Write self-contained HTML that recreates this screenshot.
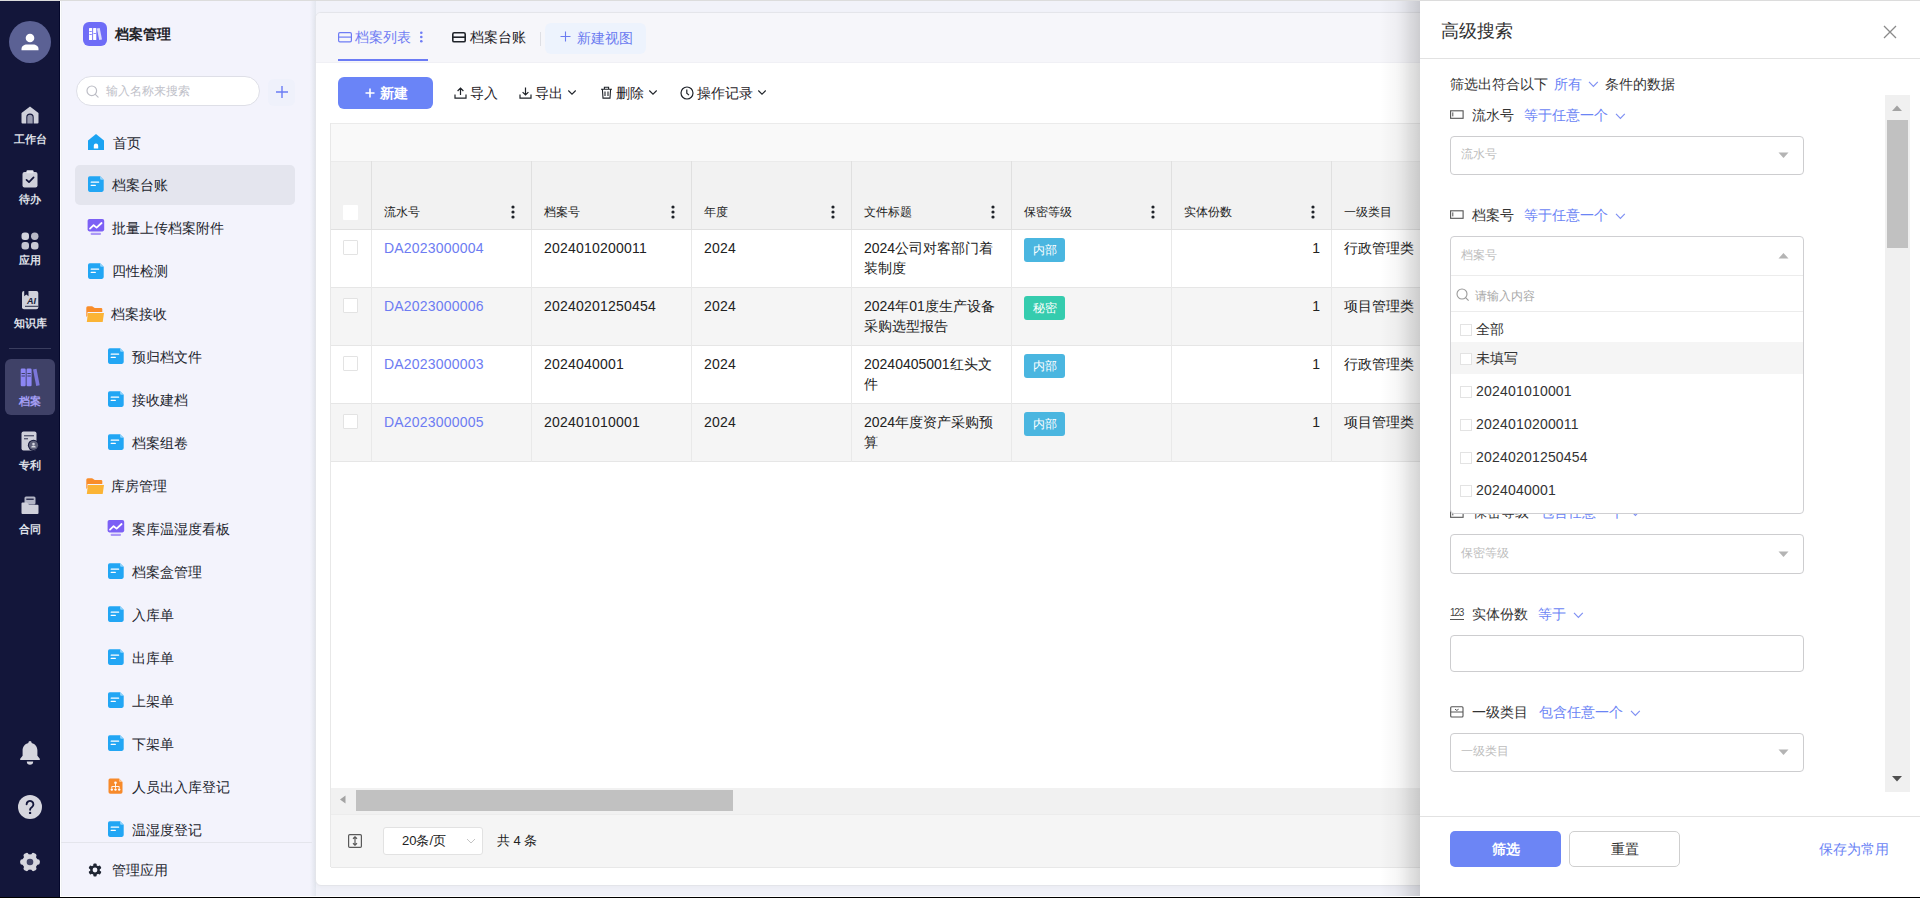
<!DOCTYPE html>
<html><head><meta charset="utf-8">
<style>
*{box-sizing:border-box;margin:0;padding:0}
html,body{width:1920px;height:898px;overflow:hidden}
body{position:relative;background:#f1f2f9;font-family:"Liberation Sans",sans-serif;color:#23262f;font-size:14px}
.abs{position:absolute}
.t{position:absolute;white-space:nowrap;line-height:20px}
.navl{font-size:11px;font-weight:bold;color:#dfe0e8}
#topline{left:0;top:0;width:1920px;height:1px;background:#dcdcdc;z-index:50}
#botline{left:0;top:897px;width:1920px;height:1px;background:#000;z-index:50}
#botwhite{left:60px;top:896px;width:1920px;height:1px;background:#fff;z-index:50}
</style></head><body>
<div class="abs" style="left:0;top:0;width:60px;height:898px;background:#13163a"></div>
<div class="abs" style="left:60px;top:0;width:256px;height:898px;background:#f3f3fc"></div>
<div class="abs" style="left:59px;top:0;width:1px;height:898px;background:#04072b"></div>
<div class="abs" style="left:60px;top:0;width:1px;height:898px;background:#fff"></div>
<div class="abs" style="left:61px;top:0;width:1px;height:898px;background:#eef0f4"></div>
<div class="abs" style="left:310px;top:0;width:6px;height:898px;background:linear-gradient(to right,rgba(220,225,232,0),rgba(220,225,232,.7))"></div>
<svg width="0" height="0" style="position:absolute">
<defs>
<linearGradient id="gdoc" x1="0" y1="0" x2="1" y2="1"><stop offset="0" stop-color="#2aa9f5"/><stop offset="1" stop-color="#1f9ff0"/></linearGradient>
<symbol id="doc" viewBox="0 0 16 16"><path d="M1.8 0.2h10.3l3.6 3.6v10.3a1.8 1.8 0 0 1-1.8 1.8H1.8A1.8 1.8 0 0 1 0 14.1V2A1.8 1.8 0 0 1 1.8 0.2z" fill="#22a6f4"/><path d="M12.1 0.2l3.6 3.6h-2.4a1.2 1.2 0 0 1-1.2-1.2z" fill="#8fd3fb"/><rect x="2.6" y="5.4" width="8.6" height="1.4" rx=".5" fill="#fff"/><rect x="2.6" y="8.7" width="5.3" height="1.4" rx=".5" fill="#fff"/></symbol>
<symbol id="folder" viewBox="0 0 18 17"><path d="M0.3 1.8a1.5 1.5 0 0 1 1.5-1.5h4c1.2 0 1.8 1.6 3 1.6h6.3a1.2 1.2 0 0 1 1.2 1.2v2.8H1.5v3.5l-1.2 1.6z" fill="#f98d2a"/><path d="M1.9 6.9H18l-1.3 9.1H0.8z" fill="#fbb435"/></symbol>
<symbol id="chart" viewBox="0 0 18 18"><rect x="0.6" y="0" width="16.6" height="12.4" rx="1.8" fill="#7c60f5"/><path d="M3 9.6l3.6-3.4 3 2.4 5-4.6" stroke="#fff" stroke-width="1.8" fill="none" stroke-linecap="round" stroke-linejoin="round"/><rect x="3.6" y="13.8" width="10.4" height="2.3" rx="1" fill="#ab98f7"/></symbol>
</defs></svg>

<!-- NAV -->
<div class="abs" style="left:9px;top:21px;width:42px;height:42px;border-radius:50%;background:#5b6194"></div>
<svg class="abs" style="left:21px;top:33px" width="18" height="18" viewBox="0 0 18 18"><circle cx="9" cy="5" r="4.3" fill="#fff"/><path d="M0.5 17.3v-1.3c0-2.6 2.6-4.4 5.4-4.4h6.2c2.8 0 5.4 1.8 5.4 4.4v1.3z" fill="#fff"/></svg>

<svg class="abs" style="left:21px;top:106px" width="18" height="18" viewBox="0 0 18 18"><path d="M9 0.5L17.5 7v9.5a1 1 0 0 1-1 1h-3.8v-6.2a3.7 3.7 0 0 0-7.4 0v6.2H1.5a1 1 0 0 1-1-1V7z" fill="#cfd0da"/><path d="M6.3 17.5v-6a2.7 2.7 0 0 1 5.4 0v6z" fill="#9a9cb0"/></svg>
<div class="t navl" style="left:0;width:60px;text-align:center;top:129px">工作台</div>

<svg class="abs" style="left:22px;top:170px" width="16" height="18" viewBox="0 0 16 18"><rect x="0.5" y="2" width="15" height="15.5" rx="2" fill="#cfd0da"/><rect x="4.5" y="0.3" width="7" height="3" rx="1" fill="#e6e7ee"/><path d="M4.5 9.8l2.5 2.4 4.6-4.8" stroke="#13163a" stroke-width="1.7" fill="none" stroke-linecap="round" stroke-linejoin="round"/></svg>
<div class="t navl" style="left:0;width:60px;text-align:center;top:189px">待办</div>

<svg class="abs" style="left:21px;top:232px" width="18" height="18" viewBox="0 0 18 18"><rect x="0.5" y="0.5" width="7.5" height="7.5" rx="3" fill="#d2d3dc"/><rect x="10" y="0.5" width="7.5" height="7.5" rx="3.7" fill="#b7b8c6"/><rect x="0.5" y="10" width="7.5" height="7.5" rx="3" fill="#c4c5d1"/><rect x="10" y="10" width="7.5" height="7.5" rx="3" fill="#c9cad5"/></svg>
<div class="t navl" style="left:0;width:60px;text-align:center;top:250px">应用</div>

<svg class="abs" style="left:22px;top:291px" width="17" height="19" viewBox="0 0 17 19"><rect x="0" y="0" width="16.3" height="18.3" rx="2" fill="#d0d1db"/><path d="M3 15.3h13.3" stroke="#2a2d4a" stroke-width="1"/><path d="M2.2 0h4.3v5.3L4.35 3.6 2.2 5.3z" fill="#13163a"/><text x="9.6" y="13.2" font-family="Liberation Sans" font-style="italic" font-weight="bold" font-size="9" fill="#1c1f3c" text-anchor="middle">AI</text></svg>
<div class="t navl" style="left:0;width:60px;text-align:center;top:313px">知识库</div>

<div class="abs" style="left:9px;top:348px;width:42px;height:1px;background:#3a3d5e"></div>
<div class="abs" style="left:5px;top:359px;width:50px;height:56px;border-radius:6px;background:#3f4167"></div>
<svg class="abs" style="left:20px;top:368px" width="20" height="19" viewBox="0 0 20 19"><rect x="0.7" y="0.5" width="5" height="17.8" rx="1.2" fill="#8c86f4"/><rect x="6.6" y="0.5" width="5" height="17.8" rx="1.2" fill="#8c86f4"/><path d="M13 1.5l3.5-.8 3.2 16.6-3.5.8z" fill="#7b76d9"/><rect x="1.5" y="5" width="3.4" height="1" fill="#3f4167"/><rect x="1.5" y="7.5" width="3.4" height="1" fill="#3f4167"/><rect x="7.4" y="5" width="3.4" height="1" fill="#3f4167"/><rect x="7.4" y="7.5" width="3.4" height="1" fill="#3f4167"/></svg>
<div class="t navl" style="left:0;width:60px;text-align:center;top:391px;color:#a49ef5">档案</div>

<svg class="abs" style="left:21px;top:431px" width="18" height="20" viewBox="0 0 18 20"><rect x="0.5" y="0.5" width="15" height="19" rx="2" fill="#cfd0da"/><rect x="3" y="4" width="10" height="1.4" fill="#5a5c74"/><rect x="3" y="7" width="4" height="1.4" fill="#5a5c74"/><circle cx="12.5" cy="14.3" r="5.6" fill="#13163a"/><circle cx="12.5" cy="14.3" r="4.6" fill="#5d5f78"/><circle cx="12.5" cy="13" r="1.3" fill="#d6d7e0"/><path d="M10.2 16.6a2.3 2 0 0 1 4.6 0z" fill="#d6d7e0"/></svg>
<div class="t navl" style="left:0;width:60px;text-align:center;top:455px">专利</div>

<svg class="abs" style="left:21px;top:496px" width="18" height="18" viewBox="0 0 18 18"><rect x="3.5" y="0.5" width="11" height="8" rx="1.5" fill="#b3b5c5"/><rect x="5.3" y="2.6" width="7.4" height="1.2" fill="#13163a"/><path d="M0.5 7.5a1 1 0 0 1 1-1h4.5l2 2.2h8.5a1 1 0 0 1 1 1v7.3a1 1 0 0 1-1 1h-15a1 1 0 0 1-1-1z" fill="#cfd0da"/></svg>
<div class="t navl" style="left:0;width:60px;text-align:center;top:519px">合同</div>

<svg class="abs" style="left:19px;top:740px" width="22" height="25" viewBox="0 0 22 25"><path d="M11 1a1.6 1.6 0 0 1 1.6 1.6v.5c3.6.8 5.8 3.8 5.8 7.5v5.2l2.4 3v1.1H1.2v-1.1l2.4-3v-5.2c0-3.7 2.2-6.7 5.8-7.5v-.5A1.6 1.6 0 0 1 11 1z" fill="#d6d6de"/><path d="M7.8 21.5h6.4a3.2 3.2 0 0 1-6.4 0z" fill="#d6d6de"/></svg>
<svg class="abs" style="left:18px;top:795px" width="24" height="24" viewBox="0 0 24 24"><circle cx="12" cy="12" r="12" fill="#d6d6de"/><path d="M8.6 9.3a3.4 3.4 0 1 1 5.2 2.9c-1.1.7-1.7 1.2-1.7 2.6" stroke="#13163a" stroke-width="1.9" fill="none" stroke-linecap="round"/><circle cx="12.1" cy="17.9" r="1.2" fill="#13163a"/></svg>
<svg class="abs" style="left:19px;top:851px" width="22" height="22" viewBox="0 0 22 22"><g fill="#d6d6de"><circle cx="11" cy="11" r="7.8"/><rect x="8.3" y="1.2" width="5.4" height="5" rx="2" transform="rotate(30 11 11)"/><rect x="8.3" y="1.2" width="5.4" height="5" rx="2" transform="rotate(90 11 11)"/><rect x="8.3" y="1.2" width="5.4" height="5" rx="2" transform="rotate(150 11 11)"/><rect x="8.3" y="1.2" width="5.4" height="5" rx="2" transform="rotate(210 11 11)"/><rect x="8.3" y="1.2" width="5.4" height="5" rx="2" transform="rotate(270 11 11)"/><rect x="8.3" y="1.2" width="5.4" height="5" rx="2" transform="rotate(330 11 11)"/></g><circle cx="11" cy="11" r="3.3" fill="#3f4264"/></svg>

<!-- SIDEBAR -->
<div class="abs" style="left:83px;top:22px;width:24px;height:24px;border-radius:6px;background:#6e6cf7"></div>
<svg class="abs" style="left:83px;top:22px" width="24" height="24" viewBox="0 0 24 24"><rect x="6" y="6" width="3.2" height="12" rx=".6" fill="#fff"/><rect x="10.1" y="6" width="3.2" height="12" rx=".6" fill="#fff"/><path d="M13.9 6.6l2.8-.6 2.3 11.5-2.8.6z" fill="#dcdcfb"/><rect x="6.4" y="9" width="2.4" height=".8" fill="#6e6cf7"/><rect x="6.4" y="12" width="2.4" height=".8" fill="#6e6cf7"/><rect x="10.5" y="11" width="2.4" height=".8" fill="#6e6cf7"/></svg>
<div class="t" style="left:115px;top:24px;font-weight:bold;color:#1f2329">档案管理</div>

<div class="abs" style="left:76px;top:76px;width:184px;height:30px;border-radius:15px;background:#fff;border:1px solid #dedfe7"></div>
<svg class="abs" style="left:86px;top:85px" width="13" height="13" viewBox="0 0 13 13"><circle cx="5.8" cy="5.8" r="4.8" stroke="#bdbec6" stroke-width="1.2" fill="none"/><path d="M9.3 9.3l2.8 2.8" stroke="#bdbec6" stroke-width="1.2" stroke-linecap="round"/></svg>
<div class="t" style="left:106px;top:81px;font-size:12px;color:#c0c1c9">输入名称来搜索</div>
<div class="abs" style="left:268px;top:79px;width:27px;height:27px;border-radius:6px;background:#eceffb;opacity:.7"></div>
<svg class="abs" style="left:275px;top:85px" width="14" height="14" viewBox="0 0 14 14"><path d="M7 1v12M1 7h12" stroke="#6b7cf5" stroke-width="1.4"/></svg>

<svg class="abs" style="left:88px;top:134px" width="16" height="16" viewBox="0 0 16 16"><path d="M8 0L16 6.6V16H0V6.6z" fill="#1ba3f2"/><path d="M5.8 14.6v-2.8a2.2 2.2 0 0 1 4.4 0v2.8z" fill="#fff"/></svg>
<div class="t" style="left:113px;top:133px">首页</div>

<div class="abs" style="left:75px;top:165px;width:220px;height:40px;border-radius:5px;background:#e4e5ee"></div>
<svg class="abs" style="left:88px;top:176px" width="16" height="16"><use href="#doc"/></svg>
<div class="t" style="left:112px;top:175px">档案台账</div>

<svg class="abs" style="left:87px;top:219px" width="18" height="18"><use href="#chart"/></svg>
<div class="t" style="left:112px;top:218px">批量上传档案附件</div>

<svg class="abs" style="left:88px;top:263px" width="16" height="16"><use href="#doc"/></svg>
<div class="t" style="left:112px;top:261px">四性检测</div>

<svg class="abs" style="left:86px;top:306px" width="18" height="17"><use href="#folder"/></svg>
<div class="t" style="left:111px;top:304px">档案接收</div>

<svg class="abs" style="left:108px;top:348px" width="16" height="16"><use href="#doc"/></svg>
<div class="t" style="left:132px;top:347px">预归档文件</div>
<svg class="abs" style="left:108px;top:391px" width="16" height="16"><use href="#doc"/></svg>
<div class="t" style="left:132px;top:390px">接收建档</div>
<svg class="abs" style="left:108px;top:434px" width="16" height="16"><use href="#doc"/></svg>
<div class="t" style="left:132px;top:433px">档案组卷</div>

<svg class="abs" style="left:86px;top:478px" width="18" height="17"><use href="#folder"/></svg>
<div class="t" style="left:111px;top:476px">库房管理</div>

<svg class="abs" style="left:107px;top:520px" width="18" height="18"><use href="#chart"/></svg>
<div class="t" style="left:132px;top:519px">案库温湿度看板</div>
<svg class="abs" style="left:108px;top:563px" width="16" height="16"><use href="#doc"/></svg>
<div class="t" style="left:132px;top:562px">档案盒管理</div>
<svg class="abs" style="left:108px;top:606px" width="16" height="16"><use href="#doc"/></svg>
<div class="t" style="left:132px;top:605px">入库单</div>
<svg class="abs" style="left:108px;top:649px" width="16" height="16"><use href="#doc"/></svg>
<div class="t" style="left:132px;top:648px">出库单</div>
<svg class="abs" style="left:108px;top:692px" width="16" height="16"><use href="#doc"/></svg>
<div class="t" style="left:132px;top:691px">上架单</div>
<svg class="abs" style="left:108px;top:735px" width="16" height="16"><use href="#doc"/></svg>
<div class="t" style="left:132px;top:734px">下架单</div>
<svg class="abs" style="left:108px;top:778px" width="16" height="16" viewBox="0 0 16 16"><path d="M2 0.5h9l3.5 3.5v10a1.8 1.8 0 0 1-1.8 1.8H2.3A1.8 1.8 0 0 1 0.5 14V2.3A1.8 1.8 0 0 1 2 0.5z" fill="#f78a2a"/><path d="M11 0.5l3.5 3.5h-2.3a1.2 1.2 0 0 1-1.2-1.2z" fill="#fbc08a"/><circle cx="7.5" cy="4.8" r="1.3" fill="#fff"/><path d="M7.5 6v2.5M3.8 8.5h7.4M3.8 8.5v2M7.5 8.5v2M11.2 8.5v2" stroke="#fff" stroke-width=".9"/><circle cx="3.8" cy="11.6" r="1.2" fill="#fff"/><circle cx="7.5" cy="11.6" r="1.2" fill="#fff"/><circle cx="11.2" cy="11.6" r="1.2" fill="#fff"/></svg>
<div class="t" style="left:132px;top:777px">人员出入库登记</div>
<svg class="abs" style="left:108px;top:821px" width="16" height="16"><use href="#doc"/></svg>
<div class="t" style="left:132px;top:820px">温湿度登记</div>

<div class="abs" style="left:61px;top:842px;width:251px;height:1px;background:#e4e5ec"></div>
<svg class="abs" style="left:88px;top:863px" width="14" height="14" viewBox="0 0 22 22"><g fill="#1f2533"><circle cx="11" cy="11" r="7.6"/><rect x="8.4" y="0.6" width="5.2" height="5" rx="1.6" transform="rotate(0 11 11)"/><rect x="8.4" y="0.6" width="5.2" height="5" rx="1.6" transform="rotate(60 11 11)"/><rect x="8.4" y="0.6" width="5.2" height="5" rx="1.6" transform="rotate(120 11 11)"/><rect x="8.4" y="0.6" width="5.2" height="5" rx="1.6" transform="rotate(180 11 11)"/><rect x="8.4" y="0.6" width="5.2" height="5" rx="1.6" transform="rotate(240 11 11)"/><rect x="8.4" y="0.6" width="5.2" height="5" rx="1.6" transform="rotate(300 11 11)"/></g><circle cx="11" cy="11" r="3.8" fill="#f3f3fc"/></svg>
<div class="t" style="left:112px;top:860px">管理应用</div>

<!-- CARD -->
<div class="abs" style="left:315px;top:12px;width:1600px;height:874px;background:#fff;border-radius:6px;border:1px solid #e4e5ea;box-shadow:0 2px 5px rgba(0,0,30,0.03)"></div>
<div class="abs" style="left:316px;top:13px;width:1598px;height:50px;background:#f6f6fa;border-radius:5px 5px 0 0;border-bottom:1px solid #f0f0f5"></div>
<svg class="abs" style="left:338px;top:32px" width="14" height="11" viewBox="0 0 14 11"><rect x=".6" y=".6" width="12.8" height="9.3" rx="1.3" stroke="#6e7cf5" stroke-width="1.2" fill="none"/><path d="M.6 5.1h12.8" stroke="#6e7cf5" stroke-width="1.2"/></svg>
<div class="t" style="left:355px;top:27px;color:#6f7cf3">档案列表</div>
<svg class="abs" style="left:419px;top:31px" width="5" height="12" viewBox="0 0 5 12"><circle cx="2.3" cy="1.8" r="1.3" fill="#6e7cf5"/><circle cx="2.3" cy="6" r="1.3" fill="#6e7cf5"/><circle cx="2.3" cy="10.2" r="1.3" fill="#6e7cf5"/></svg>
<div class="abs" style="left:338px;top:59px;width:90px;height:2px;background:#6b7bf5"></div>
<svg class="abs" style="left:452px;top:32px" width="14" height="11" viewBox="0 0 14 11"><rect x=".8" y=".8" width="12.4" height="9" rx="1.4" stroke="#1f2329" stroke-width="1.6" fill="none"/><path d="M.8 5.2h12.4" stroke="#1f2329" stroke-width="1.6"/></svg>
<div class="t" style="left:470px;top:27px;color:#1f2329">档案台账</div>
<div class="abs" style="left:540px;top:32px;width:1px;height:14px;background:#dedfe4"></div>
<div class="abs" style="left:545px;top:23px;width:101px;height:31px;border-radius:6px;background:#edf3fd"></div>
<svg class="abs" style="left:560px;top:31px" width="11" height="11" viewBox="0 0 11 11"><path d="M5.5 0.5v10M0.5 5.5h10" stroke="#6b7bf0" stroke-width="1.1"/></svg>
<div class="t" style="left:577px;top:28px;color:#6b7bf0">新建视图</div>

<div class="abs" style="left:338px;top:77px;width:95px;height:32px;border-radius:6px;background:#6a84f7"></div>
<svg class="abs" style="left:365px;top:88px" width="10" height="10" viewBox="0 0 10 10"><path d="M5 0.5v9M0.5 5h9" stroke="#fff" stroke-width="1.6"/></svg>
<div class="t" style="left:380px;top:83px;color:#fff;font-weight:bold">新建</div>

<svg class="abs" style="left:454px;top:87px" width="13" height="12" viewBox="0 0 13 12"><path d="M6.5 8V1.2M3.6 4l2.9-2.9L9.4 4M1 7.5v3.6h11V7.5" stroke="#1f2329" stroke-width="1.2" fill="none"/></svg>
<div class="t" style="left:470px;top:83px;color:#1f2329">导入</div>
<svg class="abs" style="left:519px;top:87px" width="13" height="12" viewBox="0 0 13 12"><path d="M6.5 0.5V8M3.6 5.1l2.9 2.9 2.9-2.9M1 7.5v3.6h11V7.5" stroke="#1f2329" stroke-width="1.2" fill="none"/></svg>
<div class="t" style="left:535px;top:83px;color:#1f2329">导出</div>
<svg class="abs" style="left:567px;top:89px" width="10" height="7" viewBox="0 0 10 7"><path d="M1.3 1.5l3.7 3.7 3.7-3.7" stroke="#1f2329" stroke-width="1.1" fill="none"/></svg>
<svg class="abs" style="left:600px;top:86px" width="13" height="13" viewBox="0 0 13 13"><path d="M1 3.2h11M4.4 3V1.3h4.2V3M2.4 3.2l.6 8.9h7l.6-8.9M5 5.5v4.5M8 5.5v4.5" stroke="#1f2329" stroke-width="1.1" fill="none"/></svg>
<div class="t" style="left:616px;top:83px;color:#1f2329">删除</div>
<svg class="abs" style="left:648px;top:89px" width="10" height="7" viewBox="0 0 10 7"><path d="M1.3 1.5l3.7 3.7 3.7-3.7" stroke="#1f2329" stroke-width="1.1" fill="none"/></svg>
<svg class="abs" style="left:680px;top:86px" width="14" height="14" viewBox="0 0 14 14"><circle cx="7" cy="7" r="6" stroke="#1f2329" stroke-width="1.2" fill="none"/><path d="M6.8 3.5v3.8l2.2 1.8" stroke="#1f2329" stroke-width="1.2" fill="none"/></svg>
<div class="t" style="left:697px;top:83px;color:#1f2329">操作记录</div>
<svg class="abs" style="left:757px;top:89px" width="10" height="7" viewBox="0 0 10 7"><path d="M1.3 1.5l3.7 3.7 3.7-3.7" stroke="#1f2329" stroke-width="1.1" fill="none"/></svg>

<div class="abs" style="left:330px;top:123px;width:1590px;height:38px;background:#f9f9f9;border-top:1px solid #ebebeb"></div>
<div class="abs" style="left:330px;top:161px;width:1590px;height:69px;background:#f2f2f2;border-top:1px solid #ebebeb;border-bottom:1px solid #e0e0e0"></div>
<div class="abs" style="left:330px;top:230px;width:1590px;height:58px;background:#fff;border-bottom:1px solid #e6e6e6"></div>
<div class="abs" style="left:330px;top:288px;width:1590px;height:58px;background:#f5f5f5;border-bottom:1px solid #e6e6e6"></div>
<div class="abs" style="left:330px;top:346px;width:1590px;height:58px;background:#fff;border-bottom:1px solid #e6e6e6"></div>
<div class="abs" style="left:330px;top:404px;width:1590px;height:58px;background:#f5f5f5;border-bottom:1px solid #e6e6e6"></div>
<div class="abs" style="left:330px;top:123px;width:1px;height:744px;background:#e8e8e8"></div>
<div class="abs" style="left:371px;top:161px;width:1px;height:69px;background:#e0e0e0"></div>
<div class="abs" style="left:371px;top:230px;width:1px;height:232px;background:#e9e9e9"></div>
<div class="abs" style="left:531px;top:161px;width:1px;height:69px;background:#e0e0e0"></div>
<div class="abs" style="left:531px;top:230px;width:1px;height:232px;background:#e9e9e9"></div>
<div class="abs" style="left:691px;top:161px;width:1px;height:69px;background:#e0e0e0"></div>
<div class="abs" style="left:691px;top:230px;width:1px;height:232px;background:#e9e9e9"></div>
<div class="abs" style="left:851px;top:161px;width:1px;height:69px;background:#e0e0e0"></div>
<div class="abs" style="left:851px;top:230px;width:1px;height:232px;background:#e9e9e9"></div>
<div class="abs" style="left:1011px;top:161px;width:1px;height:69px;background:#e0e0e0"></div>
<div class="abs" style="left:1011px;top:230px;width:1px;height:232px;background:#e9e9e9"></div>
<div class="abs" style="left:1171px;top:161px;width:1px;height:69px;background:#e0e0e0"></div>
<div class="abs" style="left:1171px;top:230px;width:1px;height:232px;background:#e9e9e9"></div>
<div class="abs" style="left:1331px;top:161px;width:1px;height:69px;background:#e0e0e0"></div>
<div class="abs" style="left:1331px;top:230px;width:1px;height:232px;background:#e9e9e9"></div>
<div class="abs" style="left:1491px;top:161px;width:1px;height:69px;background:#e0e0e0"></div>
<div class="abs" style="left:1491px;top:230px;width:1px;height:232px;background:#e9e9e9"></div>
<div class="abs" style="left:1651px;top:161px;width:1px;height:69px;background:#e0e0e0"></div>
<div class="abs" style="left:1651px;top:230px;width:1px;height:232px;background:#e9e9e9"></div>
<div class="abs" style="left:343px;top:205px;width:15px;height:15px;background:#fff;border-radius:1px"></div>
<div class="t" style="left:384px;top:202px;font-size:12px;color:#222">流水号</div>
<svg class="abs" style="left:511px;top:205px" width="4" height="14" viewBox="0 0 4 14"><circle cx="2" cy="2" r="1.6" fill="#1f2329"/><circle cx="2" cy="7" r="1.6" fill="#1f2329"/><circle cx="2" cy="12" r="1.6" fill="#1f2329"/></svg>
<div class="t" style="left:544px;top:202px;font-size:12px;color:#222">档案号</div>
<svg class="abs" style="left:671px;top:205px" width="4" height="14" viewBox="0 0 4 14"><circle cx="2" cy="2" r="1.6" fill="#1f2329"/><circle cx="2" cy="7" r="1.6" fill="#1f2329"/><circle cx="2" cy="12" r="1.6" fill="#1f2329"/></svg>
<div class="t" style="left:704px;top:202px;font-size:12px;color:#222">年度</div>
<svg class="abs" style="left:831px;top:205px" width="4" height="14" viewBox="0 0 4 14"><circle cx="2" cy="2" r="1.6" fill="#1f2329"/><circle cx="2" cy="7" r="1.6" fill="#1f2329"/><circle cx="2" cy="12" r="1.6" fill="#1f2329"/></svg>
<div class="t" style="left:864px;top:202px;font-size:12px;color:#222">文件标题</div>
<svg class="abs" style="left:991px;top:205px" width="4" height="14" viewBox="0 0 4 14"><circle cx="2" cy="2" r="1.6" fill="#1f2329"/><circle cx="2" cy="7" r="1.6" fill="#1f2329"/><circle cx="2" cy="12" r="1.6" fill="#1f2329"/></svg>
<div class="t" style="left:1024px;top:202px;font-size:12px;color:#222">保密等级</div>
<svg class="abs" style="left:1151px;top:205px" width="4" height="14" viewBox="0 0 4 14"><circle cx="2" cy="2" r="1.6" fill="#1f2329"/><circle cx="2" cy="7" r="1.6" fill="#1f2329"/><circle cx="2" cy="12" r="1.6" fill="#1f2329"/></svg>
<div class="t" style="left:1184px;top:202px;font-size:12px;color:#222">实体份数</div>
<svg class="abs" style="left:1311px;top:205px" width="4" height="14" viewBox="0 0 4 14"><circle cx="2" cy="2" r="1.6" fill="#1f2329"/><circle cx="2" cy="7" r="1.6" fill="#1f2329"/><circle cx="2" cy="12" r="1.6" fill="#1f2329"/></svg>
<div class="t" style="left:1344px;top:202px;font-size:12px;color:#222">一级类目</div>
<div class="abs" style="left:343px;top:240px;width:15px;height:15px;border:1px solid #e3e3e3;background:#fff;border-radius:1px"></div>
<div class="t" style="left:384px;top:238px;color:#6d7cf2;letter-spacing:.2px">DA2023000004</div>
<div class="t" style="left:544px;top:238px;color:#222;letter-spacing:.22px">2024010200011</div>
<div class="t" style="left:704px;top:238px;color:#222;letter-spacing:.22px">2024</div>
<div class="t" style="left:864px;top:238px;color:#222">2024公司对客部门着</div>
<div class="t" style="left:864px;top:258px;color:#222">装制度</div>
<div class="abs" style="left:1024px;top:238px;width:41px;height:24px;border-radius:3px;background:#4ab6e0;color:#fff;font-size:12px;line-height:24px;text-align:center">内部</div>
<div class="t" style="left:1252px;width:68px;text-align:right;top:238px;color:#222">1</div>
<div class="t" style="left:1344px;top:238px;color:#222">行政管理类</div>
<div class="abs" style="left:343px;top:298px;width:15px;height:15px;border:1px solid #e3e3e3;background:#fff;border-radius:1px"></div>
<div class="t" style="left:384px;top:296px;color:#6d7cf2;letter-spacing:.2px">DA2023000006</div>
<div class="t" style="left:544px;top:296px;color:#222;letter-spacing:.22px">20240201250454</div>
<div class="t" style="left:704px;top:296px;color:#222;letter-spacing:.22px">2024</div>
<div class="t" style="left:864px;top:296px;color:#222">2024年01度生产设备</div>
<div class="t" style="left:864px;top:316px;color:#222">采购选型报告</div>
<div class="abs" style="left:1024px;top:296px;width:41px;height:24px;border-radius:3px;background:#35ccae;color:#fff;font-size:12px;line-height:24px;text-align:center">秘密</div>
<div class="t" style="left:1252px;width:68px;text-align:right;top:296px;color:#222">1</div>
<div class="t" style="left:1344px;top:296px;color:#222">项目管理类</div>
<div class="abs" style="left:343px;top:356px;width:15px;height:15px;border:1px solid #e3e3e3;background:#fff;border-radius:1px"></div>
<div class="t" style="left:384px;top:354px;color:#6d7cf2;letter-spacing:.2px">DA2023000003</div>
<div class="t" style="left:544px;top:354px;color:#222;letter-spacing:.22px">2024040001</div>
<div class="t" style="left:704px;top:354px;color:#222;letter-spacing:.22px">2024</div>
<div class="t" style="left:864px;top:354px;color:#222">20240405001红头文</div>
<div class="t" style="left:864px;top:374px;color:#222">件</div>
<div class="abs" style="left:1024px;top:354px;width:41px;height:24px;border-radius:3px;background:#4ab6e0;color:#fff;font-size:12px;line-height:24px;text-align:center">内部</div>
<div class="t" style="left:1252px;width:68px;text-align:right;top:354px;color:#222">1</div>
<div class="t" style="left:1344px;top:354px;color:#222">行政管理类</div>
<div class="abs" style="left:343px;top:414px;width:15px;height:15px;border:1px solid #e3e3e3;background:#fff;border-radius:1px"></div>
<div class="t" style="left:384px;top:412px;color:#6d7cf2;letter-spacing:.2px">DA2023000005</div>
<div class="t" style="left:544px;top:412px;color:#222;letter-spacing:.22px">202401010001</div>
<div class="t" style="left:704px;top:412px;color:#222;letter-spacing:.22px">2024</div>
<div class="t" style="left:864px;top:412px;color:#222">2024年度资产采购预</div>
<div class="t" style="left:864px;top:432px;color:#222">算</div>
<div class="abs" style="left:1024px;top:412px;width:41px;height:24px;border-radius:3px;background:#4ab6e0;color:#fff;font-size:12px;line-height:24px;text-align:center">内部</div>
<div class="t" style="left:1252px;width:68px;text-align:right;top:412px;color:#222">1</div>
<div class="t" style="left:1344px;top:412px;color:#222">项目管理类</div>
<div class="abs" style="left:331px;top:788px;width:1590px;height:26px;background:#f1f1f1"></div>
<svg class="abs" style="left:338px;top:794px" width="9" height="11" viewBox="0 0 9 11"><path d="M2 5.5L7.5 1.5v8z" fill="#a3a3a3"/></svg>
<div class="abs" style="left:356px;top:790px;width:377px;height:21px;background:#c1c1c1"></div>
<div class="abs" style="left:331px;top:814px;width:1590px;height:54px;background:#f5f5f5;border-bottom:1px solid #e8e8e8;border-top:1px solid #ececec"></div>
<svg class="abs" style="left:347px;top:833px" width="16" height="16" viewBox="0 0 16 16"><rect x="1.6" y="1.6" width="12.8" height="12.8" rx="1.2" stroke="#595959" stroke-width="1.2" fill="none"/><path d="M8 4v8M6 5.8L8 3.9l2 1.9M6 10.2L8 12.1l2-1.9" stroke="#595959" stroke-width="1.2" fill="none"/></svg>
<div class="abs" style="left:383px;top:827px;width:100px;height:28px;background:#fff;border:1px solid #e2e2e2;border-radius:3px"></div>
<div class="t" style="left:402px;top:831px;font-size:13px;color:#222">20条/页</div>
<svg class="abs" style="left:466px;top:838px" width="10" height="6" viewBox="0 0 10 6"><path d="M1 1l4 4 4-4" stroke="#c4c4c4" stroke-width="1" fill="none"/></svg>
<div class="t" style="left:497px;top:831px;font-size:13px;color:#222">共 4 条</div>
<div class="abs" style="left:1380px;top:0;width:40px;height:898px;background:linear-gradient(to right,rgba(0,0,0,0) 0%,rgba(0,0,0,.01) 15%,rgba(0,0,0,.027) 37.5%,rgba(0,0,0,.047) 50%,rgba(0,0,0,.075) 62.5%,rgba(0,0,0,.11) 75%,rgba(0,0,0,.13) 85%,rgba(0,0,0,.15) 92.5%,rgba(0,0,0,.17) 100%)"></div>
<div class="abs" style="left:1420px;top:0;width:500px;height:898px;background:#fff"></div>
<div class="t" style="left:1441px;top:19px;font-size:18px;line-height:24px;color:#303030">高级搜索</div>
<svg class="abs" style="left:1883px;top:25px" width="14" height="14" viewBox="0 0 14 14"><path d="M1 1l12 12M13 1L1 13" stroke="#8a8a8a" stroke-width="1.3"/></svg>
<div class="abs" style="left:1420px;top:58px;width:500px;height:1px;background:#e2e2e2"></div>
<div class="t" style="left:1450px;top:74px;color:#333">筛选出符合以下</div>
<div class="t" style="left:1554px;top:74px;color:#6b84f5">所有</div>
<svg class="abs" style="left:1588px;top:81px" width="11" height="7" viewBox="0 0 11 7"><path d="M1 0.8l4.4 4.6 4.4-4.6" stroke="#7f90f3" stroke-width="1.15" fill="none"/></svg>
<div class="t" style="left:1605px;top:74px;color:#333">条件的数据</div>
<div class="abs" style="left:1885px;top:95px;width:25px;height:697px;background:#f0f0f0"></div>
<svg class="abs" style="left:1891px;top:104px" width="12" height="8" viewBox="0 0 12 8"><path d="M1 7L6 1.5 11 7z" fill="#a3a3a3"/></svg>
<div class="abs" style="left:1887px;top:120px;width:21px;height:128px;background:#c1c1c1"></div>
<svg class="abs" style="left:1891px;top:775px" width="12" height="8" viewBox="0 0 12 8"><path d="M1 1L6 6.5 11 1z" fill="#505050"/></svg>
<svg class="abs" style="left:1450px;top:110px" width="14" height="10" viewBox="0 0 14 10"><rect x=".6" y=".8" width="12.5" height="7.5" stroke="#555" stroke-width="1.1" fill="none"/><path d="M2.8 2.4v4" stroke="#555" stroke-width="1"/></svg>
<div class="t" style="left:1472px;top:105px;color:#333">流水号</div>
<div class="t" style="left:1524px;top:105px;color:#6b84f5">等于任意一个</div>
<svg class="abs" style="left:1615px;top:113px" width="11" height="7" viewBox="0 0 11 7"><path d="M1 0.8l4.4 4.6 4.4-4.6" stroke="#7f90f3" stroke-width="1.15" fill="none"/></svg>
<div class="abs" style="left:1450px;top:136px;width:354px;height:39px;border:1px solid #cdcdcf;border-radius:4px;background:#fff"></div>
<div class="t" style="left:1461px;top:144.0px;font-size:12px;color:#bdbdbd">流水号</div>
<svg class="abs" style="left:1778px;top:152px" width="11" height="7" viewBox="0 0 11 7"><path d="M0.5 0.5h10L5.5 6z" fill="#b4b4b4"/></svg>
<svg class="abs" style="left:1450px;top:210px" width="14" height="10" viewBox="0 0 14 10"><rect x=".6" y=".8" width="12.5" height="7.5" stroke="#555" stroke-width="1.1" fill="none"/><path d="M2.8 2.4v4" stroke="#555" stroke-width="1"/></svg>
<div class="t" style="left:1472px;top:205px;color:#333">档案号</div>
<div class="t" style="left:1524px;top:205px;color:#6b84f5">等于任意一个</div>
<svg class="abs" style="left:1615px;top:213px" width="11" height="7" viewBox="0 0 11 7"><path d="M1 0.8l4.4 4.6 4.4-4.6" stroke="#7f90f3" stroke-width="1.15" fill="none"/></svg>
<svg class="abs" style="left:1450px;top:509px" width="14" height="10" viewBox="0 0 14 10"><rect x=".6" y=".8" width="12.5" height="7.5" stroke="#555" stroke-width="1.1" fill="none"/><path d="M2.8 2.4v4" stroke="#555" stroke-width="1"/></svg>
<div class="t" style="left:1473px;top:502px;color:#333">保密等级</div>
<div class="t" style="left:1540px;top:502px;color:#6b84f5">包含任意一个</div>
<svg class="abs" style="left:1630px;top:510px" width="11" height="7" viewBox="0 0 11 7"><path d="M1 0.8l4.4 4.6 4.4-4.6" stroke="#7f90f3" stroke-width="1.15" fill="none"/></svg>
<div class="abs" style="left:1450px;top:534px;width:354px;height:40px;border:1px solid #cdcdcf;border-radius:4px;background:#fff"></div>
<div class="t" style="left:1461px;top:542.5px;font-size:12px;color:#bdbdbd">保密等级</div>
<svg class="abs" style="left:1778px;top:551px" width="11" height="7" viewBox="0 0 11 7"><path d="M0.5 0.5h10L5.5 6z" fill="#b4b4b4"/></svg>
<div class="abs" style="left:1450px;top:607px;width:14px;height:13px;font-size:10px;line-height:11px;letter-spacing:-1.2px;color:#444;border-bottom:1.2px solid #555;font-family:'Liberation Sans'">123</div>
<div class="t" style="left:1472px;top:604px;color:#333">实体份数</div>
<div class="t" style="left:1538px;top:604px;color:#6b84f5">等于</div>
<svg class="abs" style="left:1573px;top:612px" width="11" height="7" viewBox="0 0 11 7"><path d="M1 0.8l4.4 4.6 4.4-4.6" stroke="#7f90f3" stroke-width="1.15" fill="none"/></svg>
<div class="abs" style="left:1450px;top:635px;width:354px;height:37px;border:1px solid #cdcdcf;border-radius:4px;background:#fff"></div>
<svg class="abs" style="left:1450px;top:706px" width="14" height="12" viewBox="0 0 14 12"><rect x=".7" y=".7" width="12.3" height="10.3" rx="1" stroke="#555" stroke-width="1.1" fill="none"/><path d="M.7 6h12.3M5 3.2l1.8 1.2 1.8-1.2" stroke="#555" stroke-width="1" fill="none"/></svg>
<div class="t" style="left:1472px;top:702px;color:#333">一级类目</div>
<div class="t" style="left:1539px;top:702px;color:#6b84f5">包含任意一个</div>
<svg class="abs" style="left:1630px;top:710px" width="11" height="7" viewBox="0 0 11 7"><path d="M1 0.8l4.4 4.6 4.4-4.6" stroke="#7f90f3" stroke-width="1.15" fill="none"/></svg>
<div class="abs" style="left:1450px;top:733px;width:354px;height:39px;border:1px solid #cdcdcf;border-radius:4px;background:#fff"></div>
<div class="t" style="left:1461px;top:741.0px;font-size:12px;color:#bdbdbd">一级类目</div>
<svg class="abs" style="left:1778px;top:749px" width="11" height="7" viewBox="0 0 11 7"><path d="M0.5 0.5h10L5.5 6z" fill="#b4b4b4"/></svg>
<div class="abs" style="left:1450px;top:236px;width:354px;height:278px;border:1px solid #cfcfd2;border-radius:4px;background:#fff"></div>
<div class="t" style="left:1461px;top:245px;font-size:12px;color:#bdbdbd">档案号</div>
<svg class="abs" style="left:1778px;top:252px" width="11" height="7" viewBox="0 0 11 7"><path d="M0.5 6.5h10L5.5 1z" fill="#b4b4b4"/></svg>
<div class="abs" style="left:1451px;top:275px;width:352px;height:1px;background:#ececec"></div>
<svg class="abs" style="left:1456px;top:288px" width="14" height="14" viewBox="0 0 14 14"><circle cx="6" cy="6" r="5" stroke="#9a9a9a" stroke-width="1.1" fill="none"/><path d="M9.6 9.6l3 3" stroke="#9a9a9a" stroke-width="1.1"/></svg>
<div class="t" style="left:1475px;top:286px;font-size:12px;color:#a8a8a8">请输入内容</div>
<div class="abs" style="left:1451px;top:311px;width:352px;height:1px;background:#ececec"></div>
<div class="abs" style="left:1451px;top:342px;width:352px;height:32px;background:#f5f5f5"></div>
<div class="abs" style="left:1460px;top:324px;width:12px;height:12px;border:1px solid #e3e3e3;background:#fff"></div>
<div class="t" style="left:1476px;top:319px;color:#333;letter-spacing:0">全部</div>
<div class="abs" style="left:1460px;top:353px;width:12px;height:12px;border:1px solid #e3e3e3;background:#fff"></div>
<div class="t" style="left:1476px;top:348px;color:#333;letter-spacing:0">未填写</div>
<div class="abs" style="left:1460px;top:386px;width:12px;height:12px;border:1px solid #e3e3e3;background:#fff"></div>
<div class="t" style="left:1476px;top:381px;color:#333;letter-spacing:.2px">202401010001</div>
<div class="abs" style="left:1460px;top:419px;width:12px;height:12px;border:1px solid #e3e3e3;background:#fff"></div>
<div class="t" style="left:1476px;top:414px;color:#333;letter-spacing:.2px">2024010200011</div>
<div class="abs" style="left:1460px;top:452px;width:12px;height:12px;border:1px solid #e3e3e3;background:#fff"></div>
<div class="t" style="left:1476px;top:447px;color:#333;letter-spacing:.2px">20240201250454</div>
<div class="abs" style="left:1460px;top:485px;width:12px;height:12px;border:1px solid #e3e3e3;background:#fff"></div>
<div class="t" style="left:1476px;top:480px;color:#333;letter-spacing:.2px">2024040001</div>
<div class="abs" style="left:1420px;top:816px;width:500px;height:1px;background:#e2e2e2"></div>
<div class="abs" style="left:1450px;top:831px;width:111px;height:36px;border-radius:5px;background:#6c85f5;color:#fff;text-align:center;line-height:36px;font-weight:bold">筛选</div>
<div class="abs" style="left:1569px;top:831px;width:111px;height:36px;border-radius:5px;border:1px solid #cfcfcf;background:#fff;color:#333;text-align:center;line-height:34px">重置</div>
<div class="t" style="left:1819px;top:839px;color:#6b84f5">保存为常用</div>
<div id="topline" class="abs"></div><div id="botwhite" class="abs"></div><div id="botline" class="abs"></div>
</body></html>
